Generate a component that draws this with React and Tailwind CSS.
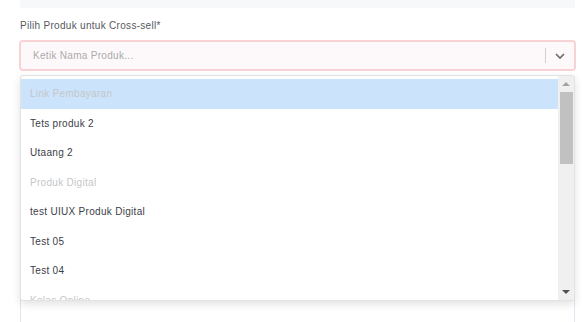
export default function App() {
  const items = [
    { t: "Link Pembayaran", h: true, active: true },
    { t: "Tets produk 2" },
    { t: "Utaang 2" },
    { t: "Produk Digital", h: true },
    { t: "test UIUX Produk Digital" },
    { t: "Test 05" },
    { t: "Test 04" },
    { t: "Kelas Online", h: true },
  ];
  return (
    <div className="w-[582px] h-[322px] bg-white overflow-hidden relative" style={{ fontFamily: '"Liberation Sans", Arial, sans-serif' }}>
      <div className="ml-[20px] w-[555px] h-[8px] bg-[#f7f8fa]" />
      <div className="ml-[20px] mt-[12px] text-[10px] leading-[12px] tracking-[0.3px] text-[#555a60]">Pilih Produk untuk Cross-sell*</div>
      <div className="ml-[19px] mt-[8px] w-[557px] h-[31px] rounded-[4px] border-2 border-[#f8d3d6] bg-[#fdf8f9] flex items-center">
        <div className="flex-1 pl-[12px] text-[10px] tracking-[0.3px] text-[#a9abae]">Ketik Nama Produk...</div>
        <div className="w-px h-[15px] bg-[#cfcfcf]" />
        <div className="w-[28px] flex justify-center">
          <svg width="10" height="6" viewBox="0 0 10 6"><path d="M1 1l4 4 4-4" fill="none" stroke="#666" strokeWidth="1.6" /></svg>
        </div>
      </div>
      <div className="ml-[20px] mt-[4px] w-[555px] h-[300px] border border-[#dfe6ee] rounded-[3px]" />
      <div className="absolute left-[20px] top-[75px] w-[555px] h-[226px] bg-white border border-[#e3e3e3] rounded-[3px] shadow-[0_3px_8px_rgba(0,0,0,0.12)] flex overflow-hidden">
        <div className="flex-1 pt-[3px] overflow-hidden">
          {items.map((it, i) => (
            <div key={i} className={`h-[29.5px] flex items-center pl-[9px] text-[10px] tracking-[0.3px] ${it.active ? "bg-[#cce4fb]" : ""} ${it.h ? "text-[#c4c6c9]" : "text-[#3c4048]"}`}>
              {it.t}
            </div>
          ))}
        </div>
        <div className="w-[16px] bg-[#f0f0f0] flex flex-col items-center">
          <div className="h-[16px] flex items-center justify-center">
            <svg width="8" height="4" viewBox="0 0 8 4"><path d="M0 4L4 0L8 4Z" fill="#a3a3a3" /></svg>
          </div>
          <div className="w-[13px] h-[72px] bg-[#c1c1c1]" />
          <div className="flex-1" />
          <div className="h-[16px] flex items-center justify-center">
            <svg width="8" height="4" viewBox="0 0 8 4"><path d="M0 0L8 0L4 4Z" fill="#505050" /></svg>
          </div>
        </div>
      </div>
    </div>
  );
}
